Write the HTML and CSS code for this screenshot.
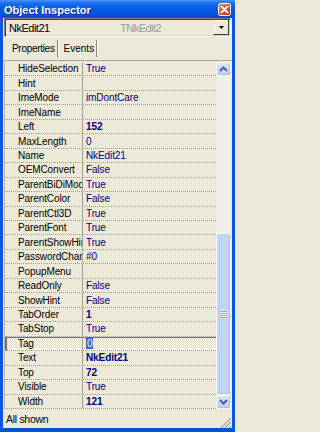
FILE: index.html
```html
<!DOCTYPE html>
<html>
<head>
<meta charset="utf-8">
<link rel="stylesheet" href="styles.css">
</head>
<body>
<div class="win">
  <div class="title">
    <span class="title-text">Object Inspector</span>
    <svg class="close" width="13" height="13" viewBox="0 0 13 13">
      <defs>
        <linearGradient id="cg" x1="0" y1="0" x2="1" y2="1">
          <stop offset="0" stop-color="#f08a68"/>
          <stop offset="0.5" stop-color="#d9522c"/>
          <stop offset="1" stop-color="#b8341a"/>
        </linearGradient>
      </defs>
      <rect x="0.5" y="0.5" width="12" height="12" rx="2" fill="url(#cg)" stroke="#ffffff"/>
      <path d="M3.5 3.5 L9.5 9.5 M9.5 3.5 L3.5 9.5" stroke="#ffffff" stroke-width="1.8" stroke-linecap="square"/>
    </svg>
  </div>
  <div class="frame">
    <div class="combo">
      <span class="cname">NkEdit21</span>
      <span class="ctype">TNkEdit2</span>
      <div class="drop">
        <svg width="5" height="3" viewBox="0 0 5 3"><path d="M0 0 H5 L2.5 3 Z" fill="#000"/></svg>
      </div>
    </div>
    <div class="tabs">
      <div class="tab tab-props">Properties</div>
      <div class="tab tab-events">Events</div>
    </div>
    <div class="grid">
      <div class="rows">
        <div class="row"><span class="nm">HideSelection</span><span class="vl">True</span></div>
        <div class="row"><span class="nm">Hint</span><span class="vl"></span></div>
        <div class="row"><span class="nm">ImeMode</span><span class="vl">imDontCare</span></div>
        <div class="row"><span class="nm">ImeName</span><span class="vl"></span></div>
        <div class="row"><span class="nm">Left</span><span class="vl b">152</span></div>
        <div class="row"><span class="nm">MaxLength</span><span class="vl">0</span></div>
        <div class="row"><span class="nm">Name</span><span class="vl">NkEdit21</span></div>
        <div class="row"><span class="nm">OEMConvert</span><span class="vl">False</span></div>
        <div class="row"><span class="nm">ParentBiDiMode</span><span class="vl">True</span></div>
        <div class="row"><span class="nm">ParentColor</span><span class="vl">False</span></div>
        <div class="row"><span class="nm">ParentCtl3D</span><span class="vl">True</span></div>
        <div class="row"><span class="nm">ParentFont</span><span class="vl">True</span></div>
        <div class="row"><span class="nm">ParentShowHint</span><span class="vl">True</span></div>
        <div class="row"><span class="nm">PasswordChar</span><span class="vl">#0</span></div>
        <div class="row"><span class="nm">PopupMenu</span><span class="vl"></span></div>
        <div class="row"><span class="nm">ReadOnly</span><span class="vl">False</span></div>
        <div class="row"><span class="nm">ShowHint</span><span class="vl">False</span></div>
        <div class="row"><span class="nm">TabOrder</span><span class="vl b">1</span></div>
        <div class="row"><span class="nm">TabStop</span><span class="vl">True</span></div>
        <div class="row sel"><span class="nm">Tag</span><span class="vl"><span class="hl">0</span></span></div>
        <div class="row"><span class="nm">Text</span><span class="vl b">NkEdit21</span></div>
        <div class="row"><span class="nm">Top</span><span class="vl b">72</span></div>
        <div class="row"><span class="nm">Visible</span><span class="vl">True</span></div>
        <div class="row"><span class="nm">Width</span><span class="vl b">121</span></div>
      </div>
      <div class="sb">
        <div class="sbbtn">
          <svg width="9" height="6" viewBox="0 0 9 6"><path d="M1 5 L4.5 1.5 L8 5" fill="none" stroke="#4d6185" stroke-width="2"/></svg>
        </div>
        <div class="track"></div>
        <div class="thumb">
          <svg width="7" height="8" viewBox="0 0 7 8">
            <rect x="0" y="0" width="7" height="1" fill="#eef4ff"/>
            <rect x="0" y="1" width="7" height="1" fill="#8cabf0"/>
            <rect x="0" y="2" width="7" height="1" fill="#eef4ff"/>
            <rect x="0" y="3" width="7" height="1" fill="#8cabf0"/>
            <rect x="0" y="4" width="7" height="1" fill="#eef4ff"/>
            <rect x="0" y="5" width="7" height="1" fill="#8cabf0"/>
            <rect x="0" y="6" width="7" height="1" fill="#eef4ff"/>
            <rect x="0" y="7" width="7" height="1" fill="#8cabf0"/>
          </svg>
        </div>
        <div class="sbbtn">
          <svg width="9" height="6" viewBox="0 0 9 6"><path d="M1 1 L4.5 4.5 L8 1" fill="none" stroke="#4d6185" stroke-width="2"/></svg>
        </div>
      </div>
    </div>
    <div class="status">
      <span class="stext">All shown</span>
      <svg class="grip" width="11" height="11" viewBox="0 0 11 11">
        <path d="M10 1 L1 10 M10 5 L5 10 M10 9 L9 10" stroke="#ffffff" stroke-width="1"/>
        <path d="M11 1 L1 11 M11 5 L5 11 M11 9 L9 11" stroke="#a09e92" stroke-width="1.2"/>
      </svg>
    </div>
  </div>
</div>
</body>
</html>
```

FILE: styles.css
```css
html, body {
  margin: 0;
  padding: 0;
  background: #ece9d8;
}

.win {
  width: 235px;
  height: 432px;
  display: flex;
  flex-direction: column;
  font-family: "Liberation Sans", Arial, sans-serif;
  overflow: hidden;
}

.title {
  height: 18px;
  flex: none;
  display: flex;
  align-items: center;
  justify-content: space-between;
  padding: 0 4px 0 4px;
  background: linear-gradient(to bottom, #4a95fa 0px, #1f6ff0 3px, #0a5ee8 7px, #0055e2 13px, #004bd0 18px);
}

.title-text {
  color: #ffffff;
  font-weight: bold;
  font-size: 11px;
  text-shadow: 1px 1px 0 #0b2a9a;
  margin-top: 1px;
}

.close {
  display: block;
  margin-top: 1px;
}

.frame {
  flex: 1;
  display: flex;
  flex-direction: column;
  background: #ece9d8;
  border-left: 3px solid #0b57e0;
  border-right: 3px solid #0b57e0;
  border-bottom: 4px solid #0a50d6;
}

.combo {
  height: 19px;
  flex: none;
  margin: 0 1px;
  box-sizing: border-box;
  border-top: 1px solid #808080;
  border-left: 1px solid #808080;
  border-right: 1px solid #ffffff;
  border-bottom: 1px solid #ffffff;
  box-shadow: inset 1px 1px 0 #404040, inset -1px -1px 0 #d4d0c8;
  display: flex;
  align-items: center;
  font-size: 11px;
  letter-spacing: -0.5px;
  padding-left: 4px;
}

.cname {
  color: #000000;
  width: 111px;
}

.ctype {
  color: #9a9a9a;
  flex: 1;
}

.drop {
  width: 15px;
  height: 15px;
  margin-right: 1px;
  box-sizing: border-box;
  background: #ece9d8;
  box-shadow: inset -1px -1px 0 #404040, inset 1px 1px 0 #ffffff;
  display: flex;
  align-items: center;
  justify-content: center;
}

.drop svg {
  display: block;
}

.tabs {
  height: 23px;
  flex: none;
  box-sizing: border-box;
  padding: 3px 0 3px 6px;
  display: flex;
}

.tab {
  height: 17px;
  display: flex;
  align-items: center;
  font-size: 10px;
  color: #000;
  border-right: 1px solid #808080;
  box-shadow: 1px 0 0 #ffffff;
}

.tab-props {
  padding: 0 2px 0 3px;
  letter-spacing: -0.3px;
}

.tab-events {
  padding: 0 2px 0 5px;
  margin-left: 1px;
}

.grid {
  height: 349px;
  flex: none;
  box-sizing: border-box;
  margin-left: 1px;
  border-top: 1px solid #a7a6a0;
  border-left: 1px solid #b9b7ac;
  padding-top: 1px;
  display: flex;
}

.rows {
  width: 211px;
  height: 347px;
  display: grid;
  grid-template-rows: repeat(24, 1fr);
}

.row {
  display: grid;
  grid-template-columns: 78px 1fr;
  border-bottom: 1px dotted #9f9e98;
  font-size: 10px;
  letter-spacing: -0.1px;
  overflow: hidden;
}

.nm {
  box-sizing: border-box;
  padding-left: 13px;
  border-right: 1px solid #a19f97;
  color: #000;
  white-space: nowrap;
  overflow: hidden;
  display: flex;
  align-items: center;
}

.vl {
  padding-left: 3px;
  color: #000080;
  white-space: nowrap;
  overflow: hidden;
  display: flex;
  align-items: center;
}

.vl.b {
  font-weight: bold;
}

.sel {
  box-shadow: inset 2px 1px 0 #6f6f6f, inset 0 -1px 0 #ffffff;
}

.hl {
  background: #316ac5;
  color: #ffffff;
  padding: 0 1px;
  line-height: 11px;
}

.sb {
  width: 15px;
  height: 347px;
  display: flex;
  flex-direction: column;
}

.sbbtn {
  height: 14px;
  flex: none;
  box-sizing: border-box;
  border: 1px solid #ffffff;
  border-radius: 2px;
  background: linear-gradient(to bottom, #dbe6fe, #bcd0fb);
  box-shadow: inset -1px -1px 0 #a8bff2;
  display: flex;
  align-items: center;
  justify-content: center;
}

.sbbtn svg {
  display: block;
}

.track {
  height: 157px;
  flex: none;
  background: #f0efe8;
}

.thumb {
  height: 162px;
  flex: none;
  box-sizing: border-box;
  border: 1px solid #ffffff;
  border-radius: 2px;
  background: #c2d3fc;
  box-shadow: inset -1px -1px 0 #a9bff4;
  display: flex;
  align-items: center;
  justify-content: center;
}

.thumb svg {
  display: block;
}

.status {
  height: 19px;
  flex: none;
  display: flex;
  align-items: center;
  justify-content: space-between;
  padding-left: 3px;
  padding-right: 1px;
  font-size: 10.5px;
  color: #000;
  position: relative;
}

.stext {
  letter-spacing: -0.3px;
}

.grip {
  align-self: flex-end;
  display: block;
}
```
